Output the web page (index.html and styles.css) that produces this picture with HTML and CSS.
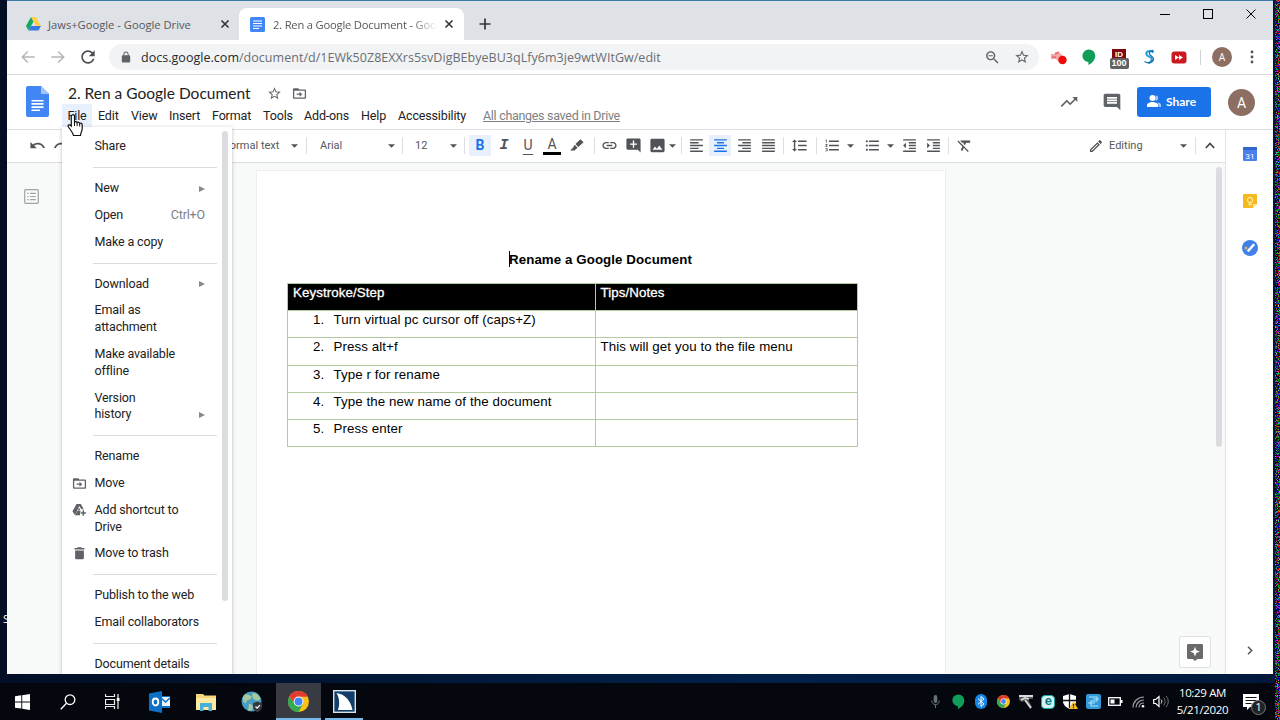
FILE: index.html
```html
<!DOCTYPE html>
<html lang="en">
<head>
  <meta charset="UTF-8">
  <title>2. Ren a Google Document - Google Docs</title>
  <link rel="stylesheet" href="styles.css">
</head>
<body>

  <!-- Shared icons -->
  <svg class="sprite" width="0" height="0">
    <symbol id="close" viewBox="0 0 10 10"><path d="M1.500 1.500l7 7M8.500 1.500l-7 7" stroke="currentColor" stroke-width="1.600"/></symbol>
    <symbol id="caret" viewBox="0 0 8 4"><path d="M0 0h8L4 4z"/></symbol>
    <symbol id="star" viewBox="0 0 24 24"><path d="M22 9.240l-7.190-.62L12 2 9.190 8.630 2 9.240l5.460 4.730L5.820 21 12 17.270 18.180 21l-1.630-7.030L22 9.240zM12 15.400l-3.760 2.270 1-4.280-3.320-2.880 4.380-.38L12 6.100l1.710 4.040 4.380.38-3.320 2.880 1 4.280L12 15.400z"/></symbol>
    <symbol id="folder-move" viewBox="0 0 24 24"><path d="M20 5.500h-8l-2-2H3.500c-1.100 0-2 .9-2 2v13c0 1.100.9 2 2 2h17c1.100 0 2-.9 2-2v-11c0-1.100-.9-2-2-2zm.4 13H3.600v-11h16.800v11zM12 17l4.500-4L12 9v3H7.500v2H12z"/></symbol>
    <symbol id="hangouts" viewBox="0 0 14 16"><path d="M7 .5a6.300 6.300 0 0 0-.6 12.600V16C10 14.300 13.300 11 13.300 6.800A6.300 6.300 0 0 0 7 .5z" fill="#0f9d58"/></symbol>
    <symbol id="chrome" viewBox="0 0 24 24">
      <circle cx="12" cy="12" r="12" fill="#fbc116"/>
      <path d="M1.600 6A12 12 0 0 0 12 24l5-9.200L12 17 7.300 14.700z" fill="#34a853"/>
      <path d="M1.600 6A12 12 0 0 1 22.700 6.500H12L7.300 14.700z" fill="#e33b2e"/>
      <circle cx="12" cy="12" r="5.600" fill="#fff"/>
      <circle cx="12" cy="12" r="4.500" fill="#4285f4"/>
    </symbol>
  </svg>

  <div class="desktop">
    <span class="desktop-label">S</span>

    <div class="window">
      <div class="tabs">
        <div class="tab">
          <svg width="15" height="14" viewBox="0 0 15 14"><path d="M5 0L0 9l2.500 4.500L7.500 4.500z" fill="#11a861"/><path d="M5 0h5l5 9h-5z" fill="#ffcf48"/><path d="M5 9h10l-2.500 4.500H2.500z" fill="#3b78e7"/></svg>
          <span class="tab-title first">Jaws+Google - Google Drive</span>
          <svg class="tab-close" width="10" height="10"><use href="#close"/></svg>
        </div>
        <div class="tab active">
          <svg width="15" height="15" viewBox="0 0 15 15"><rect width="15" height="15" rx="1.500" fill="#4285f4"/><path d="M3 4h9M3 6.500h9M3 9h9M3 11.500h6" stroke="#fff" stroke-width="1.200"/></svg>
          <span class="tab-title second">2. Ren a Google Document - Goo</span>
          <svg class="tab-close" width="10" height="10"><use href="#close"/></svg>
        </div>
        <svg class="new-tab" width="12" height="12"><path d="M6 .5v11M.5 6h11" stroke="#333" stroke-width="1.700"/></svg>
        <div class="window-buttons">
          <svg width="10" height="10"><path d="M0 5.500h10" stroke="#000"/></svg>
          <svg width="10" height="10"><rect x=".5" y=".5" width="9" height="9" fill="none" stroke="#000"/></svg>
          <svg width="10" height="10"><path d="M.5.5l9 9M9.500.5l-9 9" stroke="#000"/></svg>
        </div>
      </div>

      <div class="address-row">
        <div class="nav-btn disabled"><svg width="18" height="18" viewBox="0 0 24 24"><path d="M21 11H6.800l5.600-5.600L11 4l-8 8 8 8 1.400-1.400L6.800 13H21z"/></svg></div>
        <div class="nav-btn disabled"><svg width="18" height="18" viewBox="0 0 24 24"><path d="M13 4l-1.400 1.400L17.200 11H3v2h14.200l-5.600 5.600L13 20l8-8z"/></svg></div>
        <div class="nav-btn"><svg width="20" height="20" viewBox="0 0 24 24"><path d="M17.650 6.350C16.200 4.900 14.210 4 12 4c-4.420 0-7.990 3.580-7.990 8s3.570 8 7.990 8c3.730 0 6.840-2.550 7.730-6h-2.080c-.82 2.330-3.040 4-5.650 4-3.310 0-6-2.690-6-6s2.690-6 6-6c1.660 0 3.140.69 4.220 1.780L13 11h7V4l-2.350 2.350z"/></svg></div>
        <div class="omnibox">
          <svg width="10" height="12" viewBox="3 0 18 23"><path d="M18 8h-1V6c0-2.760-2.240-5-5-5S7 3.240 7 6v2H6c-1.100 0-2 .9-2 2v10c0 1.100.9 2 2 2h12c1.100 0 2-.9 2-2V10c0-1.100-.9-2-2-2zM15.100 8H8.900V6c0-1.710 1.390-3.100 3.100-3.100s3.100 1.390 3.100 3.100v2z"/></svg>
          <span class="url"><span class="host">docs.google.com</span>/document/d/1EWk50Z8EXXrs5svDigBEbyeBU3qLfy6m3je9wtWItGw/edit</span>
          <svg class="zoom-out" width="17" height="17" viewBox="0 0 24 24"><path d="M15.500 14h-.79l-.28-.27C15.410 12.590 16 11.110 16 9.500 16 5.910 13.090 3 9.500 3S3 5.910 3 9.500 5.910 16 9.500 16c1.610 0 3.090-.59 4.230-1.570l.27.28v.79l5 4.990L20.490 19l-4.990-5zm-6 0C7.010 14 5 11.990 5 9.500S7.010 5 9.500 5 14 7.010 14 9.500 11.990 14 9.500 14zM6.500 8.700h6v1.500h-6z"/></svg>
          <svg class="bookmark" width="16" height="16"><use href="#star"/></svg>
        </div>
        <div class="extensions">
          <div class="ext"><svg width="16" height="15" viewBox="0 0 16 15"><path d="M0 4h4V2l5 1 4 4v6H9L5 9H0z" fill="#f6a5a7"/><path d="M4 4l4-2M1 7h4" stroke="#e96a6c" stroke-width="1.500"/><circle cx="11.500" cy="10" r="4.200" fill="#f00a0a"/></svg></div>
          <div class="ext"><svg width="14" height="16"><use href="#hangouts"/></svg></div>
          <div class="ext ublock"><span class="shield">ID</span><span class="badge">100</span></div>
          <div class="ext"><svg width="12" height="16" viewBox="0 0 12 16"><path d="M10.500 3.500C7.500.5 2.500 2.500 3.500 5.500c.8 2.200 5 2.200 5.300 4.500.2 2-1.800 3.500-3.300 4.500" fill="none" stroke="#1c9bd8" stroke-width="2"/><path d="M10.500 1.500C8 1.500 6 3 6.500 5c.6 2 4 2.300 4 5 0 3.500-5 5-9 2.500" fill="none" stroke="#1571ae" stroke-width="1.300"/></svg></div>
          <div class="ext"><svg width="16" height="13" viewBox="0 0 16 13"><rect x=".5" y=".5" width="15" height="12" rx="3" fill="#c81a20"/><path d="M4 4l4 2.500L4 9zM8 4l4 2.500L8 9z" fill="#fff"/></svg></div>
          <span class="ext-divider"></span>
          <span class="avatar small">A</span>
          <svg class="dots" width="4" height="14"><circle cx="2" cy="2" r="1.400"/><circle cx="2" cy="7" r="1.400"/><circle cx="2" cy="12" r="1.400"/></svg>
        </div>
      </div>

      <div class="docs-header">
        <svg class="docs-logo" width="23" height="31" viewBox="0 0 23 31"><path d="M2 0h13l8 8v21a2 2 0 0 1-2 2H2a2 2 0 0 1-2-2V2a2 2 0 0 1 2-2z" fill="#4285f4"/><path d="M15 0l8 8h-8z" fill="#a1c2fa"/><path d="M5.500 14.700h12M5.500 17.900h12M5.500 21.100h12M5.500 24.300h8.500" stroke="#fff" stroke-width="1.600"/></svg>
        <div class="docs-title-area">
          <div class="title-row">
            <span class="doc-title">2. Ren a Google Document</span>
            <svg class="title-star" width="15" height="15"><use href="#star"/></svg>
            <svg width="15" height="15"><use href="#folder-move"/></svg>
          </div>
          <div class="menubar">
            <span class="menu-item open">File</span>
            <span class="menu-item edit">Edit</span>
            <span class="menu-item view">View</span>
            <span class="menu-item insert">Insert</span>
            <span class="menu-item format">Format</span>
            <span class="menu-item tools">Tools</span>
            <span class="menu-item addons">Add-ons</span>
            <span class="menu-item help">Help</span>
            <span class="menu-item access">Accessibility</span>
            <span class="saved">All changes saved in Drive</span>
          </div>
        </div>
        <div class="header-actions">
          <svg width="20" height="20" viewBox="0 0 24 24"><path d="M16 6l2.290 2.290-4.880 4.880-4-4L2 16.590 3.410 18l6-6 4 4 6.300-6.290L22 12V6z"/></svg>
          <svg class="comments" width="20" height="20" viewBox="0 0 24 24"><path d="M21.990 4c0-1.100-.89-2-1.990-2H4c-1.100 0-2 .9-2 2v12c0 1.100.9 2 2 2h14l4 4-.01-18zM18 14H6v-2h12v2zm0-3H6V9h12v2zm0-3H6V6h12v2z"/></svg>
          <button class="share"><svg width="14" height="12" viewBox="0 0 14 12"><circle cx="5.500" cy="3" r="3" fill="#fff"/><path d="M0 12V10c0-2 3.500-3 5.500-3s5.500 1 5.500 3v2z" fill="#fff"/><path d="M8.500.5a2.600 2.600 0 0 1 0 5.200M10.500 7.300c2 .5 3.500 1.400 3.500 2.700v2h-2z" fill="#a8c9f8"/></svg>Share</button>
          <span class="avatar">A</span>
        </div>
      </div>

      <div class="main">
        <div class="editor">
          <div class="toolbar">
            <span class="tool"><svg viewBox="0 0 24 24"><path d="M12.500 8c-2.650 0-5.050.99-6.900 2.600L2 7v9h9l-3.620-3.620c1.390-1.160 3.160-1.880 5.120-1.880 3.540 0 6.550 2.310 7.600 5.500l2.370-.78C21.080 11.030 17.150 8 12.500 8z"/></svg></span>
            <span class="tool"><svg viewBox="0 0 24 24"><path d="M18.400 10.600C16.550 8.990 14.150 8 11.500 8c-4.650 0-8.580 3.030-9.960 7.220L3.900 16c1.050-3.190 4.050-5.500 7.600-5.500 1.950 0 3.730.72 5.120 1.880L13 16h9V7l-3.600 3.600z"/></svg></span>
            <span class="select style-select">Normal text<svg class="caret"><use href="#caret"/></svg></span>
            <span class="sep"></span>
            <span class="select font-select">Arial<svg class="caret"><use href="#caret"/></svg></span>
            <span class="sep"></span>
            <span class="select size-select">12<svg class="caret"><use href="#caret"/></svg></span>
            <span class="sep"></span>
            <span class="tool on first-tool"><b>B</b></span>
            <span class="tool"><i class="italic">I</i></span>
            <span class="tool"><span class="underline">U</span></span>
            <span class="tool"><span class="text-color">A</span></span>
            <span class="tool"><svg viewBox="0 0 24 24"><path d="M17.500 3L22 7.500l-7.500 6.500-4-4zM9.500 11l4 4-3 2.500-1 1.500H3l4-4z"/></svg></span>
            <span class="sep link-sep"></span>
            <span class="tool after-sep"><svg viewBox="0 0 24 24"><path d="M3.900 12c0-1.710 1.390-3.100 3.100-3.100h4V7H7c-2.760 0-5 2.240-5 5s2.240 5 5 5h4v-1.900H7c-1.710 0-3.100-1.390-3.100-3.100zM8 13h8v-2H8v2zm9-6h-4v1.900h4c1.710 0 3.100 1.390 3.100 3.100s-1.390 3.100-3.100 3.100h-4V17h4c2.760 0 5-2.240 5-5s-2.240-5-5-5z"/></svg></span>
            <span class="tool"><svg viewBox="0 0 24 24"><path d="M21.990 4c0-1.100-.89-2-1.990-2H4c-1.100 0-2 .9-2 2v12c0 1.100.9 2 2 2h14l4 4-.01-18zM17 11h-4v4h-2v-4H7V9h4V5h2v4h4v2z"/></svg></span>
            <span class="tool"><svg viewBox="0 0 24 24"><path d="M22 19.500v-15c0-1.100-.9-2-2-2H4c-1.100 0-2 .9-2 2v15c0 1.100.9 2 2 2h16c1.100 0 2-.9 2-2zM8.500 13.500l2.500 3.010L14.500 12l4.500 6H5l3.500-4.500z"/></svg></span>
            <span class="drop image-drop"><svg class="caret"><use href="#caret"/></svg></span>
            <span class="sep"></span>
            <span class="tool after-sep"><svg viewBox="0 0 24 24"><path d="M15 15H3v2h12v-2zm0-8H3v2h12V7zM3 13h18v-2H3v2zm0 8h18v-2H3v2zM3 3v2h18V3H3z"/></svg></span>
            <span class="tool on"><svg viewBox="0 0 24 24"><path d="M7 15v2h10v-2H7zm-4 6h18v-2H3v2zm0-8h18v-2H3v2zm4-6v2h10V7H7zM3 3v2h18V3H3z"/></svg></span>
            <span class="tool"><svg viewBox="0 0 24 24"><path d="M3 21h18v-2H3v2zm6-4h12v-2H9v2zm-6-4h18v-2H3v2zm6-4h12V7H9v2zM3 3v2h18V3H3z"/></svg></span>
            <span class="tool"><svg viewBox="0 0 24 24"><path d="M3 21h18v-2H3v2zm0-4h18v-2H3v2zm0-4h18v-2H3v2zm0-4h18V7H3v2zm0-6v2h18V3H3z"/></svg></span>
            <span class="sep space-left"></span>
            <span class="tool spacing"><svg viewBox="0 0 24 24"><path d="M6 7h2.500L5 3.500 1.500 7H4v10H1.500L5 20.500 8.500 17H6V7zm4-2v2h12V5H10zm0 14h12v-2H10v2zm0-6h12v-2H10v2z"/></svg></span>
            <span class="sep"></span>
            <span class="tool space-left"><svg viewBox="0 0 24 24"><path d="M2 17h2v.5H3v1h1v.5H2v1h3v-4H2v1zm1-9h1V4H2v1h1v3zm-1 3h1.800L2 13.100v.9h3v-1H3.200L5 10.900V10H2v1zm5-6v2h14V5H7zm0 14h14v-2H7v2zm0-6h14v-2H7v2z"/></svg></span>
            <span class="drop"><svg class="caret"><use href="#caret"/></svg></span>
            <span class="tool space-left"><svg viewBox="0 0 24 24"><path d="M4 10.500c-.83 0-1.500.67-1.500 1.500s.67 1.500 1.500 1.500 1.500-.67 1.500-1.500-.67-1.500-1.500-1.500zm0-6c-.83 0-1.500.67-1.500 1.500S3.170 7.500 4 7.500 5.500 6.830 5.500 6 4.830 4.500 4 4.500zm0 12c-.83 0-1.500.68-1.500 1.500s.68 1.500 1.500 1.500 1.500-.68 1.500-1.500-.67-1.500-1.500-1.500zM7 19h14v-2H7v2zm0-6h14v-2H7v2zm0-8v2h14V5H7z"/></svg></span>
            <span class="drop"><svg class="caret"><use href="#caret"/></svg></span>
            <span class="tool"><svg viewBox="0 0 24 24"><path d="M11 17h10v-2H11v2zm-8-5l4 4V8l-4 4zm0 9h18v-2H3v2zM3 3v2h18V3H3zm8 6h10V7H11v2zm0 4h10v-2H11v2z"/></svg></span>
            <span class="tool"><svg viewBox="0 0 24 24"><path d="M3 21h18v-2H3v2zM3 8v8l4-4-4-4zm8 9h10v-2H11v2zM3 3v2h18V3H3zm8 6h10V7H11v2zm0 4h10v-2H11v2z"/></svg></span>
            <span class="sep space-left"></span>
            <span class="tool space-left"><svg viewBox="0 0 24 24"><path d="M3.270 5L2 6.270l6.970 6.970L6.500 19h3l1.570-3.660L16.730 21 18 19.730 3.550 5.270 3.270 5zM6 5v.18L8.820 8h2.400l-.72 1.680 2.100 2.100L14.210 8H20V5H6z"/></svg></span>
            <div class="mode">
              <svg width="16" height="16" viewBox="0 0 24 24"><path d="M14.060 9.020l.92.92L5.920 19H5v-.92l9.060-9.060M17.660 3c-.25 0-.51.1-.7.29l-1.830 1.830 3.750 3.750 1.830-1.830c.39-.39.39-1.020 0-1.410l-2.340-2.340c-.2-.2-.45-.29-.71-.29zm-3.600 3.190L3 17.250V21h3.750L17.810 9.940l-3.750-3.750z"/></svg>
              <span class="mode-text">Editing</span>
              <svg class="caret"><use href="#caret"/></svg>
            </div>
            <span class="sep"></span>
            <span class="collapse"><svg width="10" height="7"><path d="M.8 6L5 1.500 9.200 6" fill="none" stroke="#444" stroke-width="1.700"/></svg></span>
          </div>

          <div class="canvas">
            <div class="outline">
              <svg width="15" height="15" viewBox="0 0 16 16"><rect x=".75" y=".75" width="14.500" height="14.500" rx="1" fill="none" stroke="#a0a3a6" stroke-width="1.300"/><path d="M3.500 4.700h1.500M3.500 8h1.500M3.500 11.300h1.500M6.500 4.700h6M6.500 8h6M6.500 11.300h6" stroke="#a0a3a6" stroke-width="1.300"/></svg>
            </div>
            <div class="page">
              <h1><span class="text-cursor"></span>Rename a Google Document</h1>
              <table>
                <thead>
                  <tr>
                    <th>Keystroke/Step</th>
                    <th>Tips/Notes</th>
                  </tr>
                </thead>
                <tbody>
                  <tr><td class="step"><span>1.</span>Turn virtual pc cursor off (caps+Z)</td><td></td></tr>
                  <tr><td class="step"><span>2.</span>Press alt+f</td><td>This will get you to the file menu</td></tr>
                  <tr><td class="step"><span>3.</span>Type r for rename</td><td></td></tr>
                  <tr><td class="step"><span>4.</span>Type the new name of the document</td><td></td></tr>
                  <tr><td class="step"><span>5.</span>Press enter</td><td></td></tr>
                </tbody>
              </table>
            </div>
            <div class="canvas-right">
              <span class="scrollbar"></span>
              <span class="explore"><svg width="16" height="17" viewBox="0 0 17 18"><path d="M1.500 0h14A1.500 1.500 0 0 1 17 1.500v13a1.500 1.500 0 0 1-1.500 1.500H11l-2.500 2L6 16H1.500A1.500 1.500 0 0 1 0 14.500v-13A1.500 1.500 0 0 1 1.500 0zM8.500 2.800L7.100 6.600 3.300 8l3.800 1.400 1.400 3.800 1.400-3.800L13.700 8 9.900 6.600z" fill="#6a6a6a"/></svg></span>
            </div>
          </div>
        </div>

        <div class="side-panel">
          <svg width="14" height="14" viewBox="0 0 14 14"><rect width="14" height="14" rx="1" fill="#4a80ec"/><path d="M0 1a1 1 0 0 1 1-1h12a1 1 0 0 1 1 1v2H0z" fill="#3366cc"/><text x="7" y="11.500" text-anchor="middle" class="cal-text">31</text></svg>
          <svg width="14" height="14" viewBox="0 0 14 14"><path d="M1 0h12a1 1 0 0 1 1 1v9l-4 4H1a1 1 0 0 1-1-1V1a1 1 0 0 1 1-1z" fill="#f4b920"/><path d="M10 14l4-4h-4z" fill="#fde9a6"/><circle cx="7" cy="6" r="2.600" fill="none" stroke="#fff0b8"/><path d="M6 8.500v2.500h2V8.500" fill="none" stroke="#fff0b8"/></svg>
          <svg width="16" height="16" viewBox="0 0 16 16"><circle cx="8" cy="8" r="8" fill="#4080e8"/><circle cx="4" cy="8" r="1.500" fill="#d4b45e"/><path d="M6.500 10.500l5-5.500" stroke="#fff" stroke-width="2.600" stroke-linecap="round"/></svg>
          <svg class="side-toggle" width="6" height="9"><path d="M1 .8l3.700 3.700L1 8.200" fill="none" stroke="#555" stroke-width="1.500"/></svg>
        </div>
      </div>

      <!-- File menu -->
      <div class="file-menu">
        <div class="entries">
          <div class="entry">Share</div>
          <hr>
          <div class="entry">New<span class="arrow"></span></div>
          <div class="entry">Open<span class="shortcut">Ctrl+O</span></div>
          <div class="entry">Make a copy</div>
          <hr>
          <div class="entry">Download<span class="arrow"></span></div>
          <div class="entry">Email as<br>attachment</div>
          <div class="entry">Make available<br>offline</div>
          <div class="entry">Version<br>history<span class="arrow"></span></div>
          <hr>
          <div class="entry">Rename</div>
          <div class="entry"><svg class="entry-icon" width="15" height="15"><use href="#folder-move"/></svg>Move</div>
          <div class="entry"><svg class="entry-icon" width="14" height="14" viewBox="0 0 14 14"><path d="M4.700 1h4.200l2.800 5.300H9.500L7 2.800 4.600 7l-2 3.700L.6 8.300zM5.300 8h3.200v1.300H8v2.900H3zM7 4.800l1.500 2.700h-3z"/><path d="M.6 8.300L5 1l2 2.600-4 8.600z"/><path d="M11.300 7.300v5.400M8.600 10H14" stroke="#5f6368" stroke-width="1.500"/></svg>Add shortcut to<br>Drive</div>
          <div class="entry"><svg class="entry-icon" width="15" height="15" viewBox="0 0 24 24"><path d="M5 19c0 1.100.9 2 2 2h10c1.100 0 2-.9 2-2V7H5v12zM20 3h-4l-1-1H9L8 3H4v2.500h16z"/></svg>Move to trash</div>
          <hr>
          <div class="entry">Publish to the web</div>
          <div class="entry">Email collaborators</div>
          <hr>
          <div class="entry">Document details</div>
        </div>
        <span class="menu-scroll"></span>
      </div>
    </div>

    <div class="taskbar">
      <div class="task"><svg width="15" height="16" viewBox="0 0 15 16"><path d="M0 2.200L6.300 1.300v6.200H0zM7.200 1.200L15 0v7.500H7.200zM0 8.400h6.300v6.200L0 13.700zM7.200 8.400H15V16l-7.800-1.200z" fill="#fff"/></svg></div>
      <div class="task"><svg width="16" height="16" viewBox="0 0 16 16"><circle cx="10" cy="5.700" r="4.800" fill="none" stroke="#fff" stroke-width="1.300"/><path d="M6.500 9.300L.8 15.300" stroke="#fff" stroke-width="1.300"/></svg></div>
      <div class="task"><svg width="15" height="15" viewBox="0 0 15 15"><path d="M.5 0v2.500h9V0M.5 5.500h9v5h-9zM.5 15v-2.500h9V15M13 0v15" fill="none" stroke="#eee" stroke-width="1.200"/><rect x="11.700" y="4" width="2.800" height="3" fill="#fff"/></svg></div>
      <div class="task"><svg width="22" height="22" viewBox="0 0 22 22"><path d="M9 5h12v12H9z" fill="#0b70c6"/><path d="M12 6h9v9h-9z" fill="#e9f3fc"/><path d="M12 7l4.500 4L21 7" fill="none" stroke="#0b70c6" stroke-width="1.500"/><path d="M0 2.500L13 0v22L0 19.500z" fill="#0b70c6"/><ellipse cx="6.500" cy="11" rx="2.800" ry="3.500" fill="none" stroke="#fff" stroke-width="1.800"/></svg></div>
      <div class="task"><svg width="20" height="18" viewBox="0 0 20 18"><path d="M0 1h7l1.500 1.500H20V17H0z" fill="#f5d67c"/><path d="M0 5h20v12H0z" fill="#ffe9a1"/><path d="M4 10h12v8h-3.500v-4h-5v4H4z" fill="#45b0d8"/></svg></div>
      <div class="task"><svg width="22" height="22" viewBox="0 0 22 22"><circle cx="10.500" cy="10.500" r="10" fill="#4a9cc5"/><path d="M3 4c3-2 5 0 7 1s-1 4-3 4-1 4-3 3-3-5-1-8zM12 2c3 0 6 2 7 5s-3 3-5 2-4-5-2-7zM8 13c3 0 5 2 3 6l-4 1z" fill="#a5c99b"/><path d="M16.500 10.500l4.500 1.700v3c0 3-2 5-4.500 6-2.500-1-4.500-3-4.500-6v-3z" fill="#35383d"/><path d="M14.500 15.500l1.600 1.600 2.800-3" fill="none" stroke="#fff" stroke-width="1.200"/></svg></div>
      <div class="task running current"><svg width="21" height="21"><use href="#chrome"/></svg></div>
      <div class="task running"><svg width="23" height="23" viewBox="0 0 23 23"><rect x=".7" y=".7" width="21.600" height="21.600" fill="#123d68" stroke="#d8e4ee" stroke-width="1.400"/><path d="M3.500 3C12 4 18 11 19.500 20H5c2-6 1.500-12-1.500-17z" fill="#fff"/></svg></div>

      <div class="tray">
        <div class="tray-icon"><svg width="9" height="13"><rect x="2.700" width="3.600" height="8" rx="1.800" fill="#68717a"/><path d="M.7 5.500c0 5.500 7.600 5.500 7.600 0M4.500 9.500V13" fill="none" stroke="#68717a"/></svg></div>
        <div class="tray-icon"><svg width="13" height="15"><use href="#hangouts"/></svg></div>
        <div class="tray-icon"><svg width="12" height="15" viewBox="0 0 12 15"><rect width="12" height="15" rx="6" fill="#1686e8"/><path d="M3 4.700l6 5.200-3 2.600v-10l3 2.500-6 5.300" fill="none" stroke="#fff"/></svg></div>
        <div class="tray-icon"><svg width="13" height="13"><use href="#chrome"/></svg></div>
        <div class="tray-icon"><svg width="14" height="14"><path d="M0 0h14v4H9l4 8-2 2-5-8-3 1-3-2z" fill="#555"/><path d="M0 1h14M2 5l4-2 4 1M6 5l6 8" fill="none" stroke="#ddd" stroke-width="1.800"/></svg></div>
        <div class="tray-icon"><span class="eset">e</span></div>
        <div class="tray-icon"><svg width="15" height="15" viewBox="0 0 15 15"><path d="M6.500 0L13 2v5c0 4-3 6-6.500 8C3 13 0 11 0 7V2z" fill="#fff"/><path d="M6.500 0v14M0 6.500h13" stroke="#111" stroke-width="1.300"/><path d="M10.500 7l4.500 8H6z" fill="#fbbc16"/><path d="M10.500 10v2.500M10.500 13.200v1" stroke="#222" stroke-width="1.200"/></svg></div>
        <div class="tray-icon"><svg width="15" height="15"><rect width="15" height="15" rx="2" fill="#3299d6"/><path d="M3 3h8v4H5v5h7M7 5h6M2 9h7" fill="none" stroke="#a9e0fa" stroke-width="1.200"/></svg></div>
        <div class="tray-icon"><svg width="15" height="9"><rect x=".7" y=".7" width="11.600" height="7.600" fill="none" stroke="#fff" stroke-width="1.300"/><path d="M2.500 2.500h4v4h-4zM13 3h1.500v3H13z" fill="#fff"/></svg></div>
        <div class="tray-icon"><svg width="13" height="13" viewBox="0 0 13 13" fill="none"><circle cx="11" cy="11.300" r="1.300" fill="#fff"/><path d="M7 12.500c0-2.500 2-4.500 5-4.500M4 12.500C4 8.500 7.500 5 12 5M1 12.500C1 6.500 6 2 12 2" stroke="#9b9fa3" stroke-width="1.200"/></svg></div>
        <div class="tray-icon speaker"><svg width="16" height="13" viewBox="0 0 16 13" fill="none"><path d="M.7 4.500h2L6 1.500v10L2.700 8.500h-2z" stroke="#fff" stroke-width="1.200"/><path d="M8 4.500c1 1 1 3 0 4" stroke="#fff"/><path d="M10.500 2.500c2 2 2 6 0 8M13 1c3 3 3 8 0 11" stroke="#70757a"/></svg></div>
        <div class="clock"><span class="time">10:29 AM</span><span>5/21/2020</span></div>
        <div class="notices">
          <svg width="16" height="16"><path d="M0 0h16v13H7l-3 3v-3H0z" fill="#fff"/><path d="M2.500 3.500h11M2.500 6.500h11M2.500 9.500h6" stroke="#111"/></svg>
          <span class="notice-count">1</span>
        </div>
      </div>
    </div>

    <!-- Noisy strip along the right edge of the desktop -->
    <svg class="edge" width="5" height="720">
      <filter id="noise" x="0" y="0" width="100%" height="100%"><feTurbulence type="fractalNoise" baseFrequency="0.9" numOctaves="2" seed="4"/><feColorMatrix values="2.500 0 0 0 -1.300  0 2.500 0 0 -1.300  0 0 2.500 0 -1.200  0 0 0 0 1"/></filter>
      <rect width="5" height="720" filter="url(#noise)"/>
    </svg>

    <svg class="pointer" width="18" height="24" viewBox="0 0 18 24"><path d="M5 2c1.500-.8 2.500 0 2.500 1.300V9c.8-.8 2.300-.5 2.600.6.800-.7 2.200-.4 2.500.8 1-.7 2.600-.1 2.600 1.500V16c0 2-1.500 3.200-1.700 6.500H6.500C6 19.500 2.500 16 1.200 13.500.6 12 2.500 11 4.300 13V3.300C4.300 2.700 4.500 2.200 5 2z" fill="#fff" stroke="#111" stroke-width="1.200"/><path d="M7.500 9v4M10.100 10v3.200M12.700 11v2.500" stroke="#111"/></svg>
  </div>

</body>
</html>
```
FILE: styles.css
```css
* {
  box-sizing: border-box;
}
body {
  margin: 0;
  font-family: Roboto, sans-serif;
  color: #222;
}
svg {
  display: block;
  flex-shrink: 0;
}
.sprite {
  position: absolute;
}
.desktop {
  position: relative;
  width: 1280px;
  height: 720px;
  overflow: hidden;
  padding-left: 7px;
  background: linear-gradient(90deg, #020e25, #00214a 60%, #00193b);
}
.desktop-label {
  position: absolute;
  left: 3px;
  top: 611px;
  font: 11px "Open Sans", sans-serif;
  color: #fff;
}

/* Browser window */
.window {
  position: relative;
  width: 1266px;
  height: 674px;
  overflow: hidden;
  background: #fff;
  border-top: 1px solid #397aa6;
}
.tabs {
  display: flex;
  height: 39px;
  padding-top: 7px;
  background: #dee1e6;
}
.tab {
  display: flex;
  align-items: center;
  width: 232px;
  padding: 0 9px 0 19px;
  font: 11.2px "Open Sans", sans-serif;
  color: #55585c;
}
.tab.active {
  width: 225px;
  padding: 0 10px 0 11px;
  background: #fff;
  border-radius: 8px 8px 0 0;
}
.tab-title {
  margin-left: 7px;
  white-space: nowrap;
}
.tab-title.second {
  margin-left: 8px;
  letter-spacing: -0.2px;
  -webkit-mask-image: linear-gradient(90deg, #000 85%, transparent);
}
.tab-close {
  margin-left: auto;
  color: #333;
}
.new-tab {
  margin: 10px 0 0 15px;
}
.window-buttons {
  display: flex;
  gap: 33px;
  margin: 1px 17px 0 auto;
}
.address-row {
  display: flex;
  align-items: center;
  height: 35px;
  padding-left: 6px;
  border-bottom: 1px solid #d5d7da;
}
.nav-btn {
  display: flex;
  justify-content: center;
  width: 30px;
  fill: #4a4d51;
}
.nav-btn.disabled {
  fill: #b4b6b9;
}
.omnibox {
  display: flex;
  align-items: center;
  width: 930px;
  height: 26px;
  margin-left: 6px;
  padding: 0 9px 0 12px;
  border-radius: 13px;
  background: #f1f3f4;
  fill: #5f6368;
}
.url {
  margin-left: 10px;
  font: 12.5px "Open Sans", sans-serif;
  letter-spacing: 0.03px;
  color: #6a6e73;
  white-space: nowrap;
}
.host {
  color: #27292c;
}
.zoom-out {
  margin-left: auto;
}
.bookmark {
  margin-left: 13px;
}
.extensions {
  display: flex;
  align-items: center;
  flex: 1;
  padding-left: 5px;
}
.ext {
  display: flex;
  justify-content: center;
  width: 30px;
}
.ublock {
  flex-direction: column;
  align-items: center;
  padding-top: 4px;
}
.shield {
  width: 14px;
  height: 9px;
  font: bold 8px/12px "Liberation Sans", sans-serif;
  text-align: center;
  color: #fff;
  background: #800610;
}
.badge {
  z-index: 1;
  width: 19px;
  height: 11px;
  border-radius: 2px;
  font: bold 9px/11px "Liberation Sans", sans-serif;
  text-align: center;
  color: #fff;
  background: #5f6163;
}
.ext-divider {
  width: 1px;
  height: 15px;
  margin: 0 11px 0 6px;
  background: #cfd3d8;
}
.avatar {
  width: 27px;
  height: 27px;
  border-radius: 50%;
  background: #8d6e63;
  color: #fff;
  font-size: 14px;
  line-height: 28px;
  text-align: center;
}
.avatar.small {
  width: 20px;
  height: 20px;
  font-size: 10px;
  line-height: 21px;
}
.dots {
  margin-left: 18px;
  fill: #4f5256;
}

/* Docs header */
.docs-header {
  display: flex;
  height: 55px;
  padding-left: 19px;
  border-bottom: 1px solid #dcdee1;
}
.docs-logo {
  margin-top: 11px;
}
.docs-title-area {
  padding: 8px 0 0 6px;
}
.title-row {
  display: flex;
  align-items: center;
  height: 21px;
  padding-left: 13px;
  fill: #5f6368;
}
.doc-title {
  width: 183px;
  padding-bottom: 2px;
  font: 15.5px Lato, sans-serif;
  white-space: nowrap;
}
.title-star {
  margin: 0 10px 0 16px;
}
.menubar {
  display: flex;
  height: 23px;
  padding-left: 7px;
  font-size: 12.5px;
  line-height: 24px;
  letter-spacing: -0.15px;
  white-space: nowrap;
}
.menu-item.open {
  width: 30px;
  padding-left: 5.5px;
  background: #e8f0fe;
}
.edit {
  width: 33px;
  margin-left: 6px;
}
.view {
  width: 38px;
}
.insert {
  width: 43px;
}
.format {
  width: 51px;
}
.tools {
  width: 41px;
}
.addons {
  width: 57px;
}
.help {
  width: 37px;
}
.access {
  width: 85px;
}
.saved {
  color: #7c7f83;
  text-decoration: underline;
  letter-spacing: -0.3px;
}
.header-actions {
  display: flex;
  align-items: center;
  margin-left: auto;
  padding-right: 18px;
  fill: #5f6368;
}
.comments {
  margin: 0 15px 0 23px;
}
.share {
  display: flex;
  align-items: center;
  gap: 5px;
  width: 74px;
  height: 30px;
  margin-right: 17px;
  padding: 0 0 2px 10px;
  border: 0;
  border-radius: 3px;
  background: #1a73e8;
  color: #fff;
  font: bold 12px Lato, sans-serif;
}

/* Toolbar */
.main {
  display: flex;
  height: 544px;
}
.editor {
  width: 1219px;
  border-right: 1px solid #e1e3e6;
}
.toolbar {
  display: flex;
  align-items: center;
  height: 33px;
  padding: 0 2px 1px 18px;
  border-bottom: 1px solid #dcdee1;
  font-size: 11px;
  color: #55585c;
  fill: #505357;
}
.tool {
  display: flex;
  align-items: center;
  justify-content: center;
  width: 24px;
  height: 21px;
  font: 14px/21px Roboto, sans-serif;
  color: #505357;
}
.tool svg {
  width: 17px;
  height: 17px;
}
.tool.on {
  width: 22px;
  margin: 0 1px;
  background: #e8f0fe;
  color: #1a73e8;
  fill: #1a73e8;
}
.tool.first-tool {
  margin-left: 4px;
}
.italic {
  font: italic bold 15px "Liberation Mono", monospace;
}
.underline {
  height: 17px;
  margin-top: 2px;
  line-height: 15px;
  border-bottom: 1px solid #505357;
}
.text-color {
  width: 18px;
  height: 19px;
  line-height: 16px;
  text-align: center;
  border-bottom: 3px solid #000;
}
.sep {
  width: 1px;
  height: 17px;
  background: #dcdee1;
}
.link-sep {
  margin-left: 6px;
}
.after-sep {
  margin-left: 2px;
}
.space-left {
  margin-left: 3px;
}
.spacing {
  margin: 0 5px 0 3px;
}
.caret {
  width: 7px;
  height: 4px;
}
.select {
  display: flex;
  align-items: center;
  justify-content: space-between;
  white-space: nowrap;
}
.style-select {
  width: 84px;
  margin-left: 149px;
  padding-right: 8px;
}
.font-select {
  width: 95px;
  padding: 0 7px 0 13px;
}
.size-select {
  width: 61px;
  padding: 0 7px 0 12px;
}
.drop {
  display: flex;
  justify-content: center;
  width: 13px;
}
.image-drop {
  width: 12px;
  padding-right: 5px;
}
.mode {
  display: flex;
  align-items: center;
  width: 107px;
  margin-left: auto;
  padding-right: 8px;
}
.mode-text {
  margin: 0 auto 0 5px;
}
.collapse {
  display: flex;
  justify-content: center;
  width: 27px;
  padding-left: 1px;
}

/* Document */
.canvas {
  display: flex;
  height: 511px;
  background: #f8f9f9;
}
.outline {
  width: 249px;
  padding: 26px 0 0 17px;
}
.page {
  width: 690px;
  margin-top: 7px;
  padding: 78px 0 0 30px;
  background: #fff;
  border: 1px solid #eceef0;
  border-bottom: 0;
  font-family: "Liberation Sans", Arial, sans-serif;
  color: #000;
}
.page h1 {
  display: flex;
  width: 627px;
  justify-content: center;
  align-items: center;
  height: 20px;
  margin: 0 0 14px;
  font-size: 13.3px;
  letter-spacing: 0.08px;
}
.text-cursor {
  width: 1px;
  height: 16px;
  margin-right: -1px;
  background: #000;
}
.page table {
  width: 571px;
  table-layout: fixed;
  border-collapse: collapse;
  font-size: 13.3px;
  letter-spacing: 0.09px;
}
.page th, .page td {
  height: 27.2px;
  padding: 0 5px;
  border: 1px solid #b3c9a0;
  line-height: 17px;
  text-align: left;
  vertical-align: top;
  white-space: nowrap;
}
.page th:first-child {
  width: 307.5px;
}
.page th {
  background: #000;
  color: #fff;
  font-weight: normal;
  -webkit-text-stroke: 0.3px #fff;
}
.page td.step {
  padding-left: 25px;
}
.step span {
  display: inline-block;
  width: 20.5px;
}
.canvas-right {
  display: flex;
  flex-direction: column;
  flex: 1;
  justify-content: space-between;
  align-items: flex-end;
  padding: 4px 3px 6px 0;
}
.scrollbar {
  width: 6px;
  height: 280px;
  border-radius: 3px;
  background: #dadce0;
}
.explore {
  display: flex;
  align-items: center;
  justify-content: center;
  width: 32px;
  height: 32px;
  margin-right: 11px;
  background: #fff;
  border: 1px solid #dfe1e3;
  border-radius: 2px;
}
.side-panel {
  display: flex;
  flex-direction: column;
  align-items: center;
  flex: 1;
  padding: 17px 0 19px;
  gap: 32.5px;
}
.cal-text {
  font: 8px Roboto, sans-serif;
  fill: #fff;
}
.side-toggle {
  margin-top: auto;
}

/* File menu */
.file-menu {
  position: absolute;
  left: 55px;
  top: 126px;
  display: flex;
  width: 170px;
  height: 560px;
  background: #fff;
  box-shadow: 0 1px 4px rgba(0,0,0,0.25);
}
.entries {
  width: 155px;
  padding-top: 6.4px;
  font-size: 12.5px;
  line-height: 16.8px;
  letter-spacing: -0.15px;
}
.entry {
  position: relative;
  padding: 5px 0 5px 32.5px;
  white-space: nowrap;
}
.entries hr {
  height: 1px;
  margin: 7px 0 7px 31px;
  border: 0;
  background: #d9dbdd;
}
.entry-icon {
  position: absolute;
  left: 10px;
  top: 6px;
  fill: #5f6368;
}
.shortcut {
  position: absolute;
  right: 12px;
  color: #7c7f83;
}
.arrow {
  position: absolute;
  right: 12.5px;
  bottom: 10px;
  border: solid transparent;
  border-width: 3px 0 3px 6px;
  border-left-color: #888;
}
.menu-scroll {
  width: 6px;
  height: 470px;
  margin: 4px 0 0 5px;
  border-radius: 3px;
  background: #dadce0;
}

/* Taskbar */
.taskbar {
  display: flex;
  height: 37px;
  margin: 9px 0 0 -7px;
  background: #04080e;
}
.task {
  display: flex;
  align-items: center;
  justify-content: center;
  width: 46px;
}
.task:first-child {
  width: 45px;
}
.task:nth-child(3) {
  width: 43px;
  margin-right: 3px;
}
.task.running {
  width: 38px;
  margin-left: 4px;
  padding-top: 2px;
  border-bottom: 2px solid #76b9ed;
}
.task.current {
  width: 45px;
  margin-left: 1px;
  background: #383b42;
}
.tray {
  display: flex;
  align-items: center;
  margin-left: auto;
  padding-right: 6px;
}
.tray-icon {
  display: flex;
  align-items: center;
  justify-content: center;
  width: 22.5px;
}
.eset {
  width: 14px;
  height: 14px;
  border-radius: 4px;
  background: #d4f5f3;
  border: 1px solid #1ba7a5;
  font: bold 13px/10px "Liberation Sans", sans-serif;
  text-align: center;
  color: #087b80;
}
.clock {
  display: flex;
  flex-direction: column;
  align-items: center;
  width: 61px;
  margin-top: -2px;
  font: 11.5px/17px "Open Sans", sans-serif;
  letter-spacing: -0.35px;
  color: #fff;
  white-space: nowrap;
}
.notices {
  position: relative;
  width: 41px;
  padding-left: 10px;
}
.notice-count {
  position: absolute;
  left: 18px;
  top: 6px;
  width: 15px;
  height: 15px;
  border: 1px solid #777;
  border-radius: 50%;
  background: #222;
  color: #fff;
  font-size: 10px;
  line-height: 13px;
  text-align: center;
}
.edge {
  position: absolute;
  left: 1275px;
  top: 0;
}
.pointer {
  position: absolute;
  left: 67px;
  top: 113px;
}
```
